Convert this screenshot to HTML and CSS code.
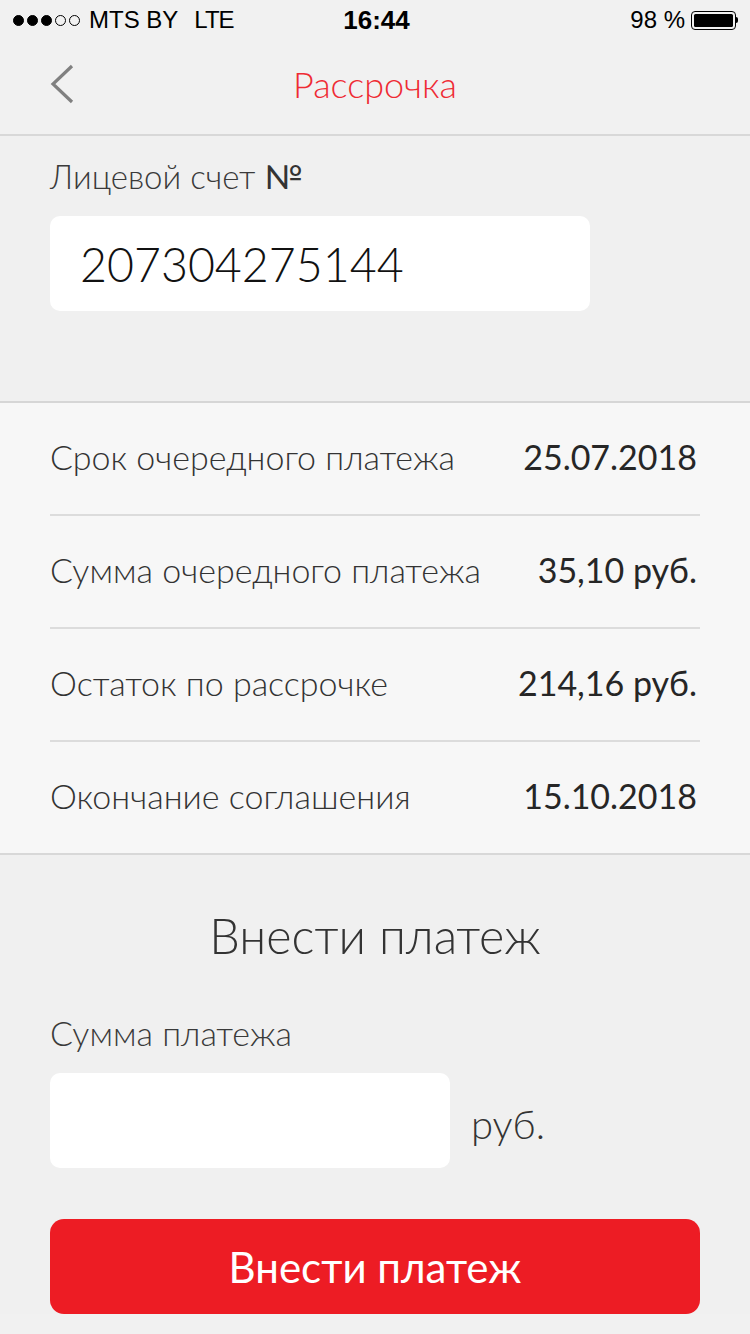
FILE: index.html
```html
<!DOCTYPE html>
<html lang="ru">
<head>
<meta charset="utf-8">
<title>Рассрочка</title>
<link rel="stylesheet" href="styles.css">
</head>
<body>
<div class="screen">
  <div class="statusbar">
    <div class="sb-left">
      <span class="dots"><i class="on"></i><i class="on"></i><i class="on"></i><i></i><i></i></span>
      <span class="carrier">MTS BY</span>
      <span class="net">LTE</span>
    </div>
    <div class="sb-time">16:44</div>
    <div class="sb-right">
      <span class="pct">98 %</span>
      <span class="battery"><span class="battery-fill"></span></span>
      <span class="battery-tip"></span>
    </div>
  </div>

  <div class="navbar">
    <span class="back">
      <svg width="26" height="42" viewBox="0 0 26 42"><path d="M22 3 L3 21 L22 39" fill="none" stroke="#808080" stroke-width="3.2"/></svg>
    </span>
    <h1 class="title">Рассрочка</h1>
  </div>

  <div class="account">
    <div class="field-label">Лицевой счет <b>№</b></div>
    <div class="account-input">207304275144</div>
  </div>

  <div class="info">
    <div class="row"><span class="row-label">Срок очередного платежа</span><span class="row-value">25.07.2018</span></div>
    <div class="row"><span class="row-label">Сумма очередного платежа</span><span class="row-value">35,10 руб.</span></div>
    <div class="row"><span class="row-label">Остаток по рассрочке</span><span class="row-value">214,16 руб.</span></div>
    <div class="row"><span class="row-label">Окончание соглашения</span><span class="row-value">15.10.2018</span></div>
  </div>

  <div class="pay">
    <h2 class="pay-title">Внести платеж</h2>
    <div class="pay-label">Сумма платежа</div>
    <div class="amount-row">
      <div class="amount-input"></div>
      <span class="currency">руб.</span>
    </div>
    <button class="pay-btn">Внести платеж</button>
  </div>
</div>
</body>
</html>
```

FILE: styles.css
```css
* { box-sizing: border-box; }
html, body { margin: 0; padding: 0; }
body {
  background: #f1f1f1;
  font-family: Lato, "Open Sans", "Noto Sans", sans-serif;
  color: #333;
}
.screen { width: 750px; height: 1334px; overflow: hidden; background: #f1f1f1; }

/* status bar */
.statusbar {
  height: 40px;
  display: grid;
  grid-template-columns: 1fr auto 1fr;
  align-items: center;
  padding: 0 12px 0 13px;
  font-family: "Liberation Sans", Arial, sans-serif;
  font-size: 24px;
  color: #000;
}
.sb-left { display: flex; align-items: center; }
.dots { display: flex; gap: 3px; margin-right: 9px; }
.dots i {
  display: block; width: 11px; height: 11px; border-radius: 50%;
  border: 1.2px solid #000; background: transparent;
}
.dots i.on { background: #000; }
.carrier { margin-right: 16px; }
.net { letter-spacing: -1px; }
.sb-time { font-weight: 700; font-size: 26px; padding-left: 2px; }
.sb-right { display: flex; align-items: center; justify-content: flex-end; }
.pct { margin-right: 6px; }
.battery {
  width: 45px; height: 19px; border: 1.5px solid #000; border-radius: 4px;
  padding: 2px; display: flex;
}
.battery-fill { flex: 1; background: #000; border-radius: 1.5px; }
.battery-tip { width: 2px; height: 6px; background: #000; border-radius: 0 2px 2px 0; }

/* nav */
.navbar {
  height: 96px;
  display: flex;
  align-items: center;
  justify-content: center;
  position: relative;
  border-bottom: 2px solid #d8d8d8;
  padding-bottom: 6px;
}
.back { position: absolute; left: 50px; top: 23px; display: block; height: 42px; }
.back svg { display: block; }
.title {
  margin: 0; font-weight: 300; font-size: 36px; color: #ef2b34;
}

/* account */
.account {
  height: 267px;
  padding: 20px 50px 0;
  border-bottom: 2px solid #d6d6d6;
  background: #f0f0f0;
}
.field-label { font-size: 33px; font-weight: 300; color: #3a3a3a; line-height: 40px; }
.field-label b { font-weight: 400; color: #333; }
.account-input {
  margin-top: 20px;
  width: 540px; height: 95px;
  background: #fff; border-radius: 10px;
  padding-left: 30px;
  font-size: 46.5px; font-weight: 300; color: #111;
  display: flex; align-items: center;
}

/* info */
.info {
  background: #f7f7f7;
  border-bottom: 2px solid #d8d8d8;
  padding: 0 52px 0 50px;
}
.row {
  height: 113px;
  display: flex; align-items: center; justify-content: space-between;
  border-bottom: 2px solid #dcdcdc;
  padding-bottom: 4px;
  margin-right: -2px;
}
.row:last-child { border-bottom: none; height: 111px; }
.row-label { font-size: 34px; font-weight: 300; color: #333; }
.row-value { font-size: 34px; font-weight: 400; color: #262626; padding-right: 3px; }

/* pay */
.pay { padding: 48px 50px 0; background: #f0f0f0; }
.pay-title {
  margin: 0; text-align: center; font-size: 48.5px; font-weight: 300; color: #333; line-height: 64px;
}
.pay-label { margin-top: 46px; font-size: 34px; font-weight: 300; color: #3a3a3a; line-height: 40px; }
.amount-row { display: flex; align-items: center; margin-top: 20px; }
.amount-input { width: 400px; height: 95px; background: #fff; border-radius: 10px; }
.currency { margin-left: 21px; font-size: 40px; font-weight: 300; color: #333; padding-top: 6px; }
.pay-btn {
  display: block; width: 650px; height: 95px; margin-top: 51px;
  border: none; border-radius: 14px; background: #ed1c24; color: #fff;
  font-family: Lato, "Open Sans", "Noto Sans", sans-serif;
  font-size: 42px; font-weight: 400;
}
```
